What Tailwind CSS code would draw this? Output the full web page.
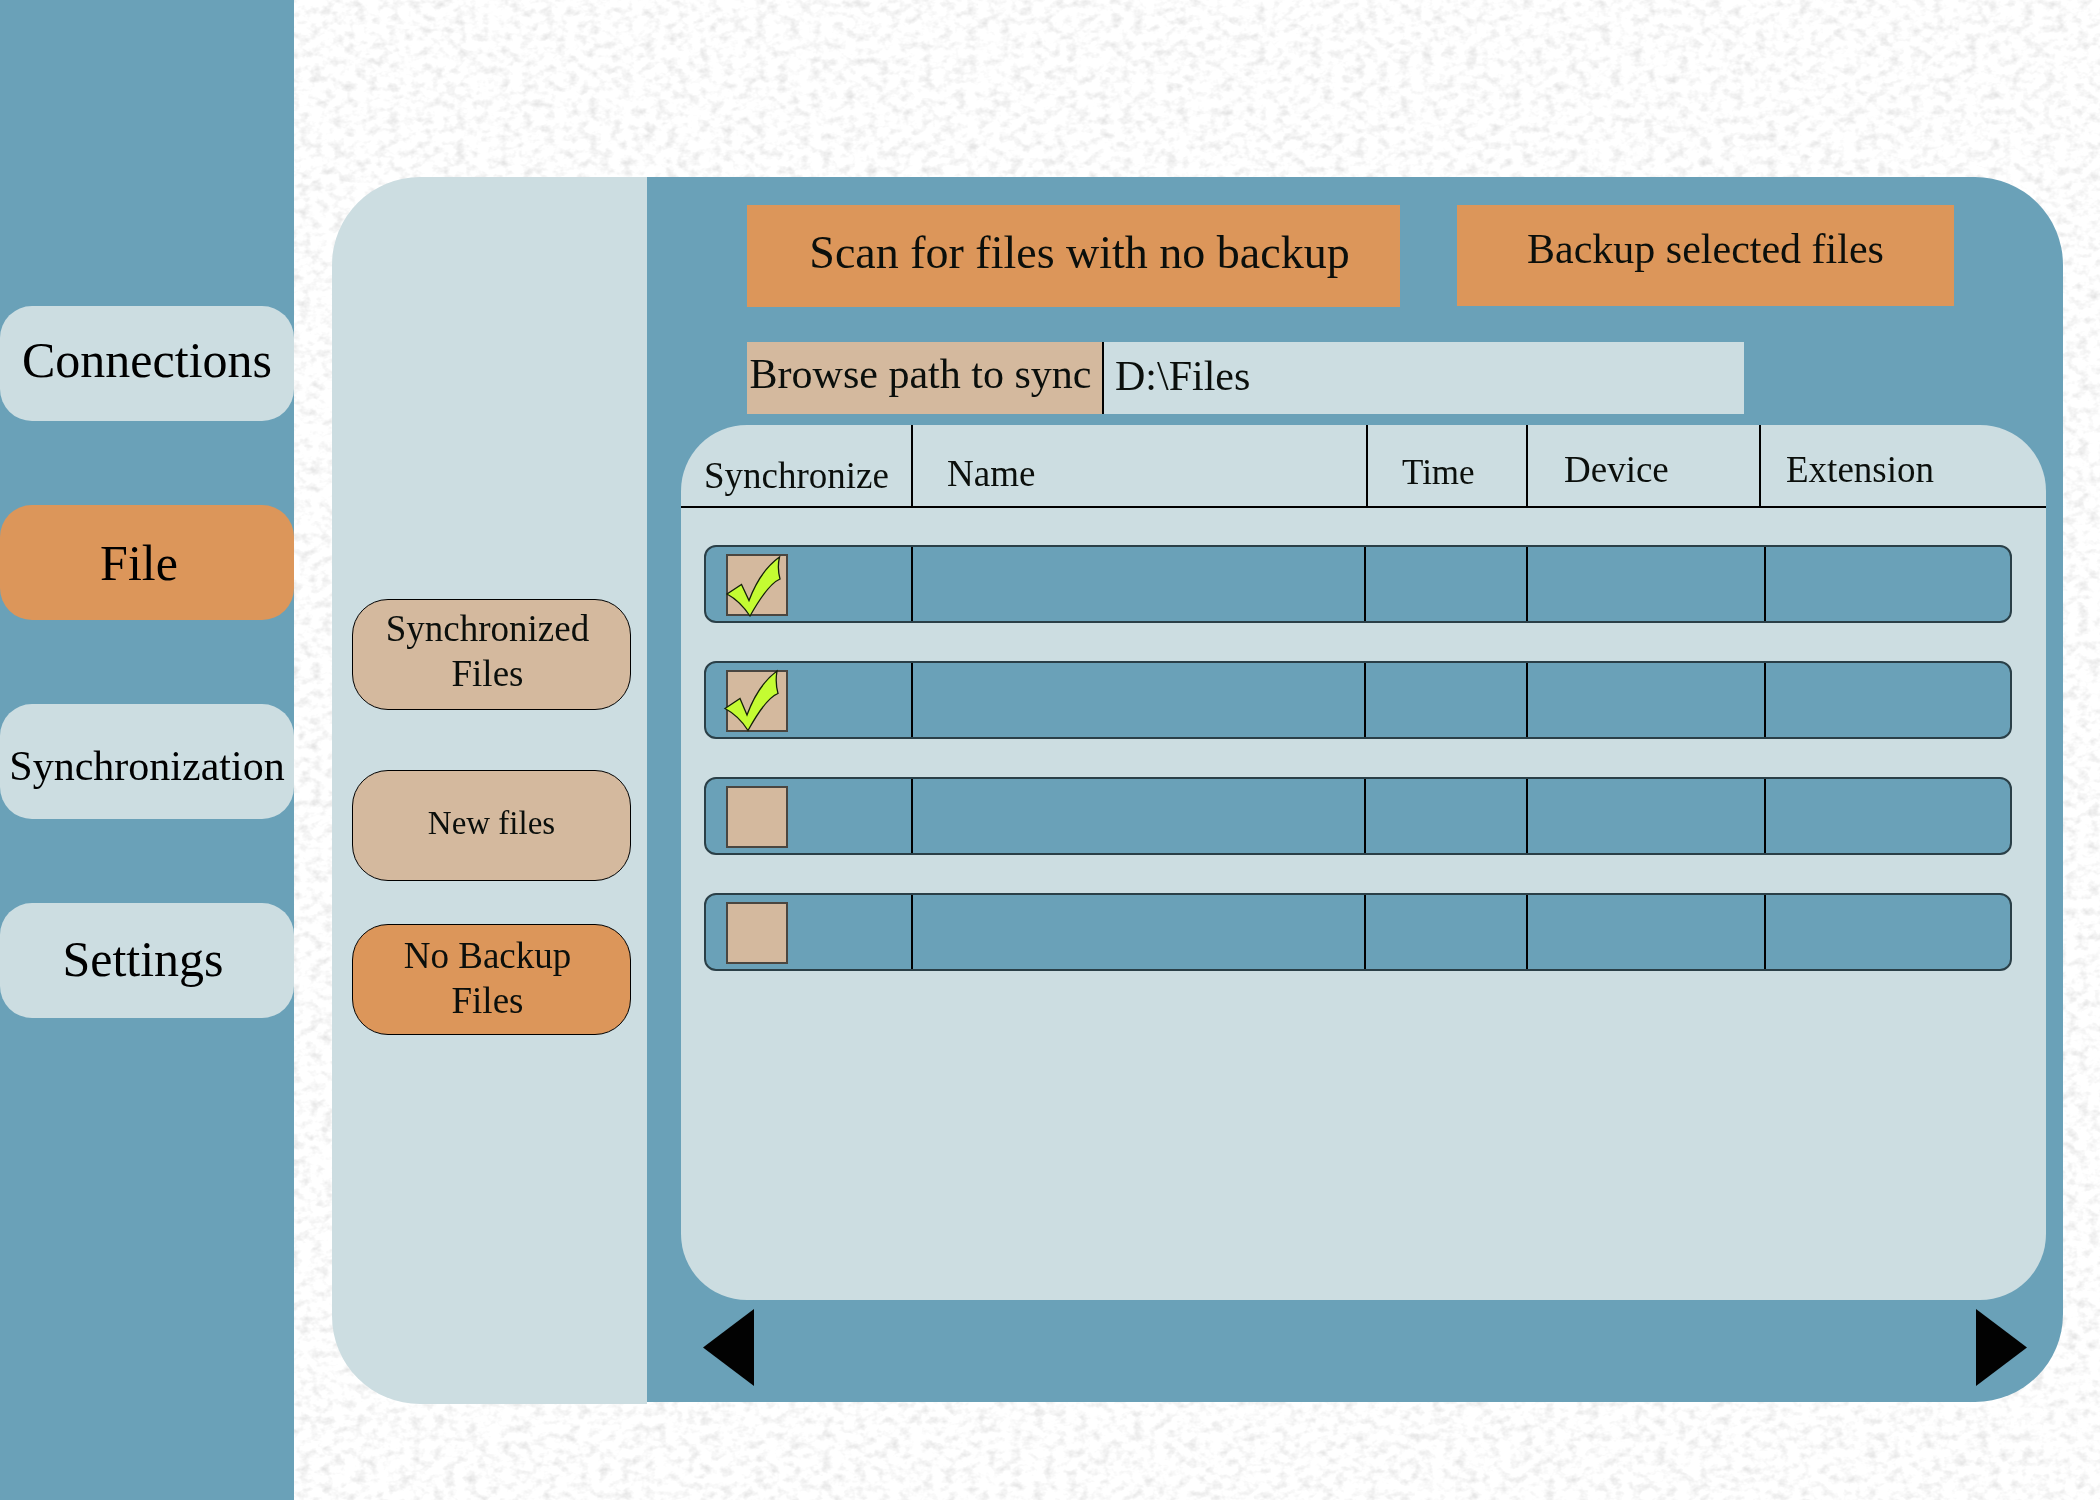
<!DOCTYPE html>
<html lang="en">
<head>
<meta charset="utf-8">
<meta name="viewport" content="width=device-width, initial-scale=1">
<title>File backup</title>
<script src="https://cdn.jsdelivr.net/npm/@tailwindcss/browser@4"></script>
</head>
<body class="bg-white font-['Liberation_Serif','Times_New_Roman',serif] text-[#0b0f0c]">
<!-- Paper texture behind the whole page -->
<svg class="fixed inset-0 -z-10 h-full w-full" aria-hidden="true">
  <filter id="paper" x="0" y="0" width="100%" height="100%" color-interpolation-filters="sRGB">
    <feTurbulence type="fractalNoise" baseFrequency="0.09 0.12" numOctaves="3" seed="4"/>
    <feColorMatrix values="0 0 0 0 0  0 0 0 0 0  0 0 0 0 0  0.24 0 0 0 -0.112"/>
  </filter>
  <rect width="100%" height="100%" filter="url(#paper)"/>
</svg>

<div class="flex min-h-screen">
  <nav class="flex w-[294px] shrink-0 flex-col gap-[84px] bg-[#6aa1b8] pt-[306px] text-[50px] leading-none text-black" aria-label="Main">
    <a href="#connections" class="flex h-[115px] items-center justify-center rounded-[32px] bg-[#ccdde1] pb-2">Connections</a>
    <a href="#file" aria-current="page" class="flex h-[115px] items-center justify-center rounded-[32px] bg-[#dc965a] pr-4">File</a>
    <a href="#synchronization" class="flex h-[115px] items-center justify-center rounded-[32px] bg-[#ccdde1] pt-2 text-[42px]">Synchronization</a>
    <a href="#settings" class="flex h-[115px] items-center justify-center rounded-[32px] bg-[#ccdde1] pr-2 pb-1">Settings</a>
  </nav>

  <main class="flex min-w-0 flex-1 pt-[177px] pr-[37px] pb-24 pl-[38px]">
    <aside class="flex w-[315px] shrink-0 flex-col rounded-l-[88px] bg-[#ccdde1] pr-4 pl-5 pt-[422px] text-[37px] leading-[45px]">
      <button class="h-[111px] rounded-[36px] border border-black bg-[#d4b99e] pr-2 pb-2">Synchronized<br>Files</button>
      <button class="mt-[60px] h-[111px] rounded-[36px] border border-black bg-[#d4b99e] pb-1 text-[33px]">New files</button>
      <button class="mt-[43px] h-[111px] rounded-[36px] border border-black bg-[#dc965a] pr-2 pb-1" aria-pressed="true">No Backup<br>Files</button>
    </aside>

    <section class="mb-0.5 flex min-w-0 flex-1 flex-col rounded-r-[88px] bg-[#6aa1b8] pt-7 pr-[17px] pb-4 pl-[34px]">
      <div class="grid grid-cols-[653fr_497fr] gap-[57px] pr-[92px] pl-[66px]">
        <button class="h-[102px] bg-[#dc965a] pb-2 pl-3 text-[46px]">Scan for files with no backup</button>
        <button class="h-[101px] bg-[#dc965a] pb-3 text-[42px]">Backup selected files</button>
      </div>

      <div class="mt-[35px] mr-[302px] ml-[66px] flex h-[72px] text-[42px]">
        <button id="browse" class="w-[357px] shrink-0 border-r-2 border-black bg-[#d4b99e] pb-2 pr-2 whitespace-nowrap">Browse path to sync</button>
        <input type="text" value="D:\Files" aria-labelledby="browse" class="min-w-0 flex-1 bg-[#ccdde1] pb-1 pl-[11px] outline-none">
      </div>

      <div class="mt-[11px] min-h-[875px] flex-1 overflow-hidden rounded-[66px] bg-[#ccdde1]">
        <table class="block text-[37px] leading-none">
          <thead class="block">
            <tr class="grid h-[83px] grid-cols-[232px_1fr_160px_233px_285px] border-b-2 border-black text-left">
              <th class="border-r-2 border-black pt-8 pl-[23px] font-normal">Synchronize</th>
              <th class="border-r-2 border-black pt-[30px] pl-[34px] font-normal">Name</th>
              <th class="border-r-2 border-black pt-[30px] pl-[34px] text-[35px] font-normal">Time</th>
              <th class="border-r-2 border-black pt-[26px] pl-9 font-normal">Device</th>
              <th class="pt-[26px] pl-[25px] font-normal">Extension</th>
            </tr>
          </thead>
          <tbody class="flex flex-col gap-[38px] pt-[37px] pr-[34px] pl-[23px]">
            <tr class="grid h-[78px] grid-cols-[207px_1fr_162px_238px_244px] rounded-[12px] border-2 border-[#2a3f47] bg-[#6aa1b8]">
              <td class="border-r-2 border-black pt-[7px] pl-5">
                <label class="relative block size-[62px]">
                  <input type="checkbox" checked aria-label="Synchronize file 1" class="peer block size-[62px] appearance-none border-2 border-[#4a4640] bg-[#d4b99e]">
                  <svg class="pointer-events-none invisible absolute inset-0 overflow-visible peer-checked:visible" width="62" height="62" viewBox="0 0 62 62" aria-hidden="true"><path d="M1 40 15.500 30.500 23 46.500Q34 17 53.500 3Q51 14 54 25Q42 30 24 62Q14 47 1 40Z" fill="#c4fc32" stroke="#14200a" stroke-width="1.300"/></svg>
                </label>
              </td>
              <td class="border-r-2 border-black"></td><td class="border-r-2 border-black"></td><td class="border-r-2 border-black"></td><td></td>
            </tr>
            <tr class="grid h-[78px] grid-cols-[207px_1fr_162px_238px_244px] rounded-[12px] border-2 border-[#2a3f47] bg-[#6aa1b8]">
              <td class="border-r-2 border-black pt-[7px] pl-5">
                <label class="relative block size-[62px]">
                  <input type="checkbox" checked aria-label="Synchronize file 2" class="peer block size-[62px] appearance-none border-2 border-[#4a4640] bg-[#d4b99e]">
                  <svg class="pointer-events-none invisible absolute inset-0 overflow-visible peer-checked:visible" width="62" height="62" viewBox="0 0 62 62" aria-hidden="true"><path d="M-1 38.500 14 28.500 21 45Q32 15 51 1Q49 13 52 23.500Q40 28 22 60.500Q13 46 -1 38.500Z" fill="#c4fc32" stroke="#14200a" stroke-width="1.300"/></svg>
                </label>
              </td>
              <td class="border-r-2 border-black"></td><td class="border-r-2 border-black"></td><td class="border-r-2 border-black"></td><td></td>
            </tr>
            <tr class="grid h-[78px] grid-cols-[207px_1fr_162px_238px_244px] rounded-[12px] border-2 border-[#2a3f47] bg-[#6aa1b8]">
              <td class="border-r-2 border-black pt-[7px] pl-5">
                <label class="relative block size-[62px]">
                  <input type="checkbox" aria-label="Synchronize file 3" class="peer block size-[62px] appearance-none border-2 border-[#4a4640] bg-[#d4b99e]">
                  <svg class="pointer-events-none invisible absolute inset-0 overflow-visible peer-checked:visible" width="62" height="62" viewBox="0 0 62 62" aria-hidden="true"><path d="M1 40 15.500 30.500 23 46.500Q34 17 53.500 3Q51 14 54 25Q42 30 24 62Q14 47 1 40Z" fill="#c4fc32" stroke="#14200a" stroke-width="1.300"/></svg>
                </label>
              </td>
              <td class="border-r-2 border-black"></td><td class="border-r-2 border-black"></td><td class="border-r-2 border-black"></td><td></td>
            </tr>
            <tr class="grid h-[78px] grid-cols-[207px_1fr_162px_238px_244px] rounded-[12px] border-2 border-[#2a3f47] bg-[#6aa1b8]">
              <td class="border-r-2 border-black pt-[7px] pl-5">
                <label class="relative block size-[62px]">
                  <input type="checkbox" aria-label="Synchronize file 4" class="peer block size-[62px] appearance-none border-2 border-[#4a4640] bg-[#d4b99e]">
                  <svg class="pointer-events-none invisible absolute inset-0 overflow-visible peer-checked:visible" width="62" height="62" viewBox="0 0 62 62" aria-hidden="true"><path d="M1 40 15.500 30.500 23 46.500Q34 17 53.500 3Q51 14 54 25Q42 30 24 62Q14 47 1 40Z" fill="#c4fc32" stroke="#14200a" stroke-width="1.300"/></svg>
                </label>
              </td>
              <td class="border-r-2 border-black"></td><td class="border-r-2 border-black"></td><td class="border-r-2 border-black"></td><td></td>
            </tr>
          </tbody>
        </table>
      </div>

      <div class="mt-[9px] flex justify-between pr-[19px] pl-[22px]">
        <button aria-label="Previous page"><svg class="block" width="51" height="77" viewBox="0 0 51 77" aria-hidden="true"><path d="M51 0V77L0 38.500Z" fill="#020202"/></svg></button>
        <button aria-label="Next page"><svg class="block" width="51" height="77" viewBox="0 0 51 77" aria-hidden="true"><path d="M0 0V77L51 38.500Z" fill="#020202"/></svg></button>
      </div>
    </section>
  </main>
</div>
</body>
</html>
